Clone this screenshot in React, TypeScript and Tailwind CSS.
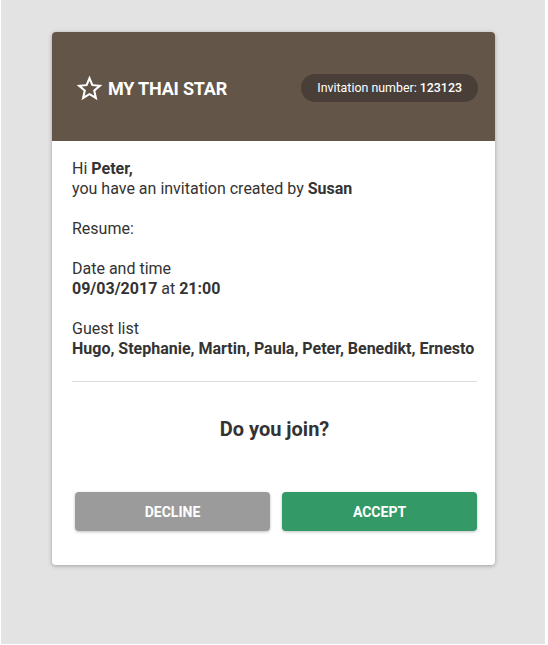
import React from "react";

export default function App() {
  return (
    <div className="w-[548px] h-[645px] bg-white" style={{ fontFamily: "Roboto, 'Liberation Sans', sans-serif" }}>
      <div className="ml-[1px] w-[544px] h-[644px] bg-[#e3e3e3] pt-[32px]">
        <div className="ml-[51px] w-[443px] bg-white rounded-[4px] shadow-[0_1px_4px_rgba(0,0,0,0.3)] overflow-hidden">
          <div className="h-[109px] bg-[#635548] flex items-center justify-between pl-[22px] pr-[17px] pt-[3px]">
            <div className="flex items-center gap-[3px] text-white">
              <svg width="31" height="31" viewBox="0 0 24 24" fill="white">
                <path d="M22 9.24l-7.19-.62L12 2 9.19 8.63 2 9.24l5.46 4.73L5.82 21 12 17.27 18.18 21l-1.63-7.03L22 9.24zM12 15.4l-3.76 2.27 1-4.28-3.32-2.88 4.38-.38L12 6.1l1.71 4.04 4.38.38-3.32 2.88 1 4.28L12 15.4z" />
              </svg>
              <span className="text-[18px] font-bold tracking-[-0.2px]">MY THAI STAR</span>
            </div>
            <div className="h-[28px] px-[16px] rounded-full bg-[#4a3f38] text-white text-[12.4px] flex items-center">
              Invitation number:&nbsp;<span className="font-medium">123123</span>
            </div>
          </div>
          <div className="pl-[20px] pr-[18px] pt-[18px] pb-[34px] text-[16px] leading-[20px] text-[#333]">
            <div>Hi <b>Peter,</b></div>
            <div>you have an invitation created by <b>Susan</b></div>
            <div className="mt-[20px]">Resume:</div>
            <div className="mt-[20px]">Date and time</div>
            <div><b>09/03/2017</b> at <b>21:00</b></div>
            <div className="mt-[20px]">Guest list</div>
            <div className="font-bold whitespace-nowrap">Hugo, Stephanie, Martin, Paula, Peter, Benedikt, Ernesto</div>
            <div className="mt-[22px] border-t border-[#dcdcdc]" />
            <div className="mt-[35px] text-center text-[20px] font-bold leading-[24px]">Do you join?</div>
            <div className="mt-[51px] flex gap-[12px] pl-[3px]">
              <button className="flex-1 h-[39px] rounded-[4px] bg-[#9b9b9b] text-white text-[14px] font-bold shadow-[0_1px_3px_rgba(0,0,0,0.25)]">DECLINE</button>
              <button className="flex-1 h-[39px] rounded-[4px] bg-[#339966] text-white text-[14px] font-bold shadow-[0_1px_3px_rgba(0,0,0,0.25)]">ACCEPT</button>
            </div>
          </div>
        </div>
      </div>
    </div>
  );
}
